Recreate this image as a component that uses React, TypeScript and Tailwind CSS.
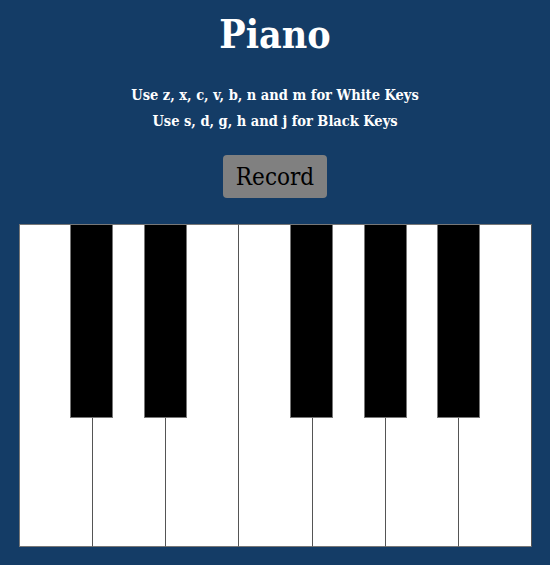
import React from 'react';

const whiteKeys = ['z', 'x', 'c', 'v', 'b', 'n', 'm'];
// left offset (px) of each black key inside the keyboard
const blackKeys = [
  { key: 's', left: 51 },
  { key: 'd', left: 125 },
  { key: 'g', left: 271 },
  { key: 'h', left: 345 },
  { key: 'j', left: 418 },
];

const App = () => {
  return (
    <div
      className="min-h-[565px] w-full bg-[#143c66] flex flex-col items-center pt-[10px]"
      style={{ fontFamily: '"DejaVu Serif Condensed", "DejaVu Serif", serif' }}
    >
      <h1 className="text-[39px] leading-[48px] font-bold text-white">Piano</h1>
      <div className="mt-[24px] text-white font-bold text-[14.5px] leading-[26px] text-center">
        <p>Use z, x, c, v, b, n and m for White Keys</p>
        <p>Use s, d, g, h and j for Black Keys</p>
      </div>
      <button className="mt-[21px] h-[43px] w-[104px] bg-[#808080] rounded-[4px] text-black text-[24px]">
        Record
      </button>
      <div className="relative mt-[26px] ml-[1px] w-[513px] h-[323px] flex">
        {whiteKeys.map((k) => (
          <div
            key={k}
            className="flex-1 h-full bg-white border border-[#555] border-l-0 first:border-l first:border-l-[#777] last:border-r-[#777] border-b-[#777] border-t-[#777]"
          />
        ))}
        {blackKeys.map((b) => (
          <div
            key={b.key}
            className="absolute top-0 w-[43px] h-[194px] bg-black border border-[#777]"
            style={{ left: b.left }}
          />
        ))}
      </div>
    </div>
  );
};

export default App;
